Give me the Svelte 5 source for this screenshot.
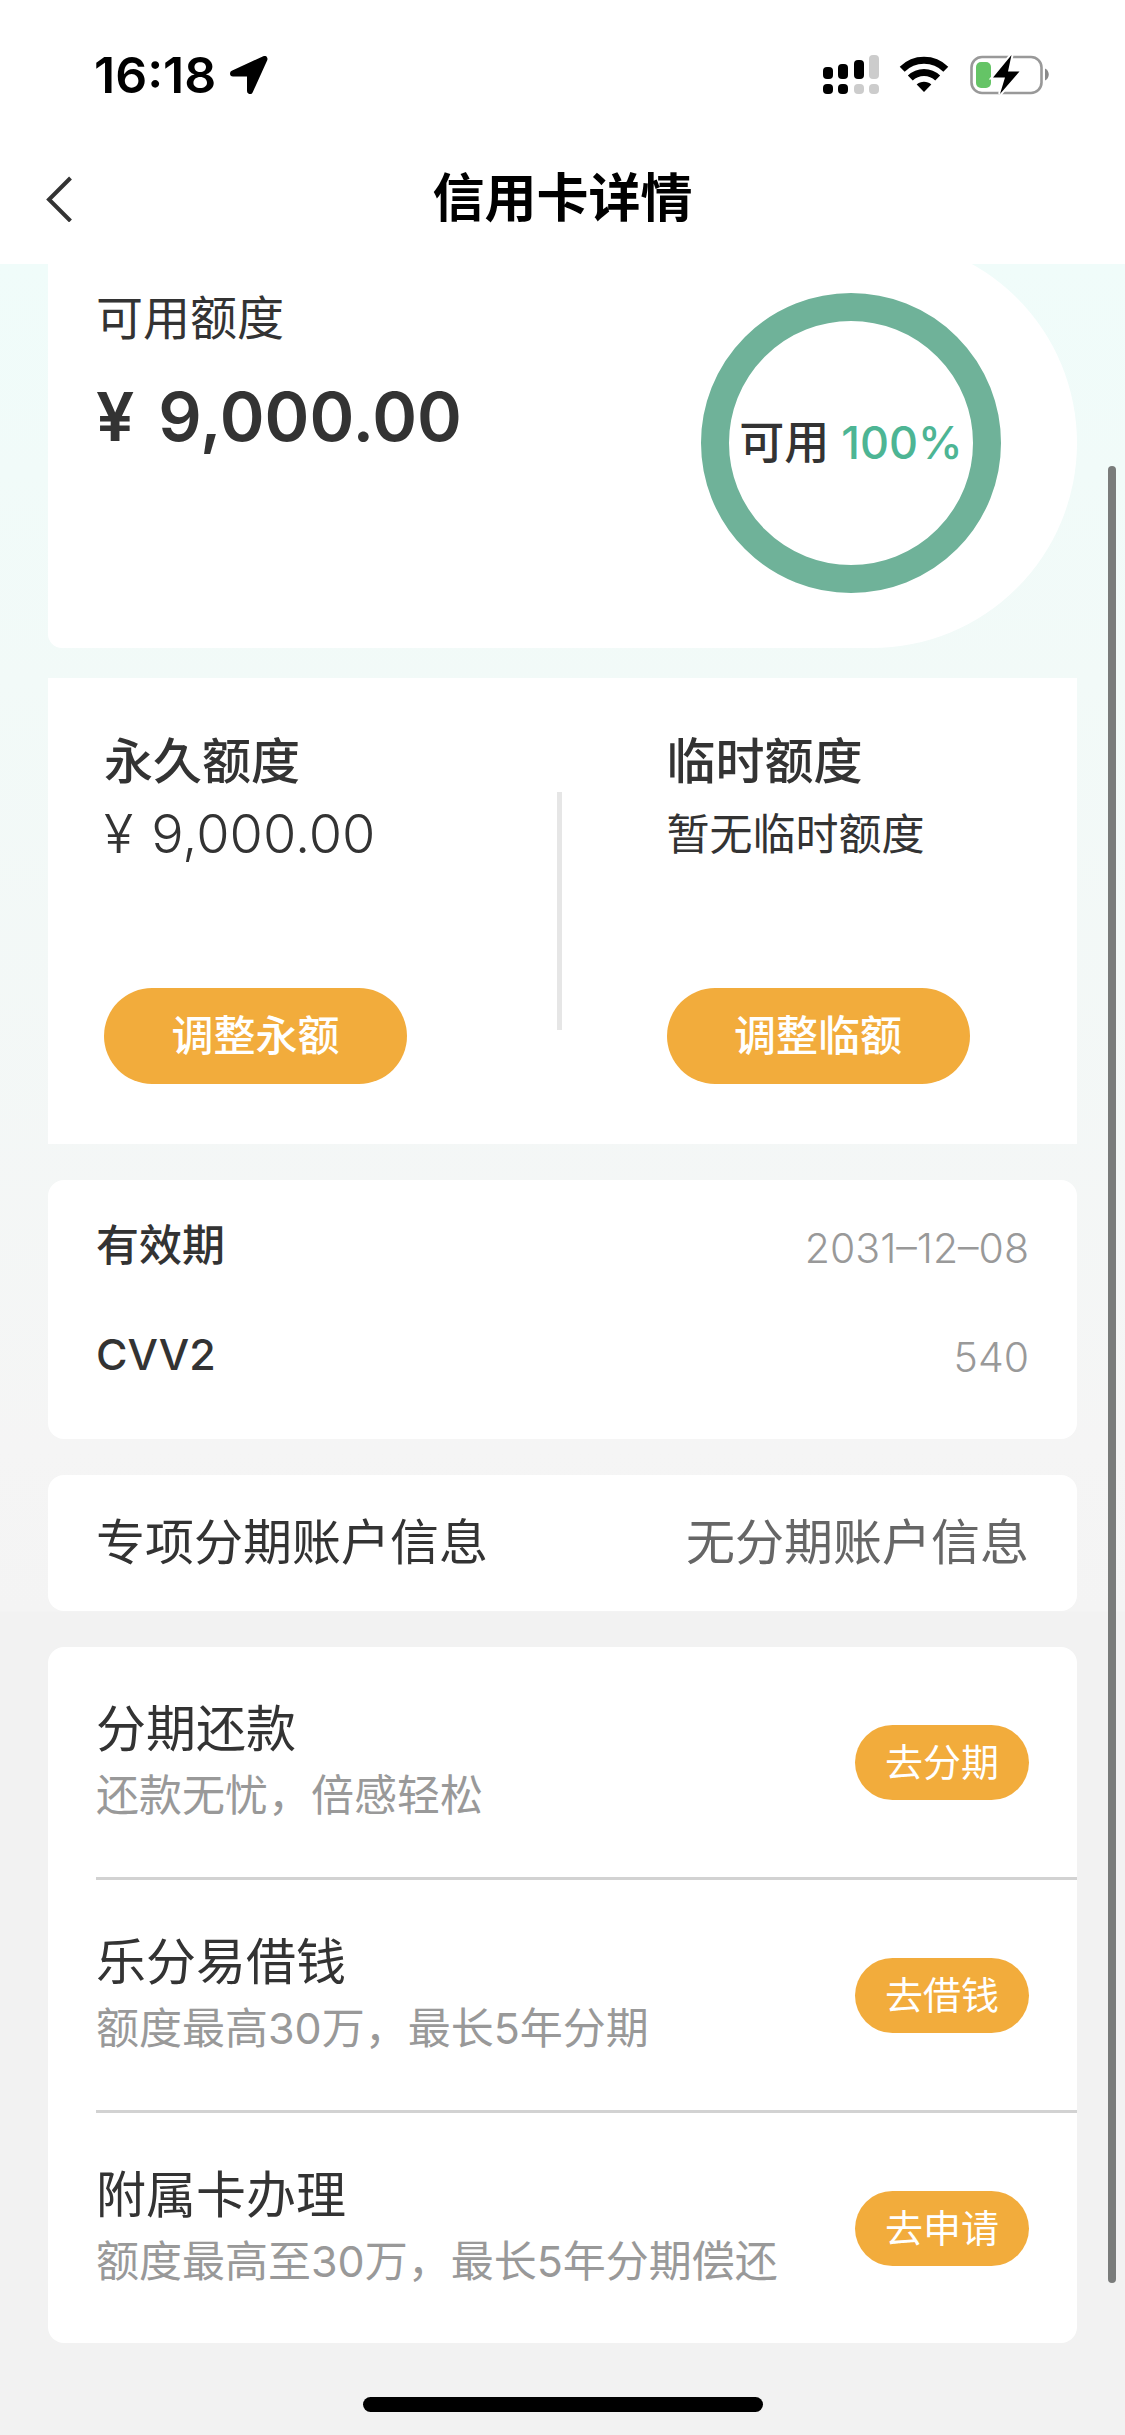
<script lang="ts">
  const limits = [
    { title: "永久额度", value: "9,000.00", money: true, action: "调整永额" },
    { title: "临时额度", value: "暂无临时额度", money: false, action: "调整临额" },
  ];

  const info = [
    { label: "有效期", value: "2031–12–08" },
    { label: "CVV2", value: "540" },
  ];

  const services = [
    { title: "分期还款", desc: "还款无忧，倍感轻松", action: "去分期" },
    { title: "乐分易借钱", desc: "额度最高30万，最长5年分期", action: "去借钱" },
    { title: "附属卡办理", desc: "额度最高至30万，最长5年分期偿还", action: "去申请" },
  ];

  let percent = 100;
  const radius = 136;
  const around = 2 * Math.PI * radius;
  $: dash = (percent / 100) * around;
</script>

<div class="page">
  <header>
    <div class="status">
      <div class="clock">
        <span>16:18</span>
        <svg width="38" height="38" viewBox="0 0 38 38">
          <path d="M3 17.5 34.500 3 20 35V17.500Z" fill="#000" stroke="#000" stroke-width="6" stroke-linejoin="round" />
        </svg>
      </div>
      <div class="signals">
        <svg width="56" height="40" viewBox="0 0 56 40">
          <g fill="#000">
            <rect x="0" y="12" width="10" height="12" rx="4" />
            <rect x="15" y="9" width="10" height="15" rx="4" />
            <rect x="31" y="5" width="10" height="19" rx="4" />
            <rect x="0" y="29" width="10" height="10" rx="4" />
            <rect x="15" y="29" width="10" height="10" rx="4" />
          </g>
          <g fill="#ccc">
            <rect x="46" y="0" width="10" height="24" rx="4" />
            <rect x="31" y="29" width="10" height="10" rx="4" />
            <rect x="46" y="29" width="10" height="10" rx="4" />
          </g>
        </svg>
        <svg width="50" height="40" viewBox="0 0 50 40">
          <g fill="none" stroke="#000" stroke-width="7">
            <path d="M3.200 14.200A31 31 0 0 1 46.800 14.200" />
            <path d="M11.300 23A19.500 19.500 0 0 1 38.700 23" />
          </g>
          <path d="M17.700 29.500C21.500 25.800 28.500 25.800 32.300 29.500L25 37Z" fill="#000" />
        </svg>
        <svg width="80" height="40" viewBox="0 0 80 40">
          <rect x="2.500" y="2" width="70" height="36" rx="10.500" fill="none" stroke="#999" stroke-width="2.600" />
          <path d="M76 13.500c5 2 5 10 0 12Z" fill="#8a8a8a" />
          <rect x="7" y="7" width="15" height="26" rx="5" fill="#65c466" />
          <path d="M42.500 0 24 22.500h12L31 39 50.500 16.500H39Z" fill="#000" stroke="#fff" stroke-width="4" paint-order="stroke" />
        </svg>
      </div>
    </div>
    <nav>
      <button class="back" aria-label="返回">
        <svg width="28" height="46" viewBox="0 0 28 46">
          <path d="M25.500 2 4 23.500 25.500 45" fill="none" stroke="#333" stroke-width="4" />
        </svg>
      </button>
      <h1>信用卡详情</h1>
    </nav>
  </header>

  <main>
    <section class="available">
      <div>
        <p class="label">可用额度</p>
        <p class="amount"><span>¥</span>9,000.00</p>
      </div>
      <div class="ring">
        <svg viewBox="0 0 300 300">
          <circle cx="150" cy="150" r={radius} fill="none" stroke="#6fb299" stroke-width="28" stroke-dasharray="{dash} {around}" transform="rotate(-90 150 150)" />
        </svg>
        <p>可用 <span>{percent}%</span></p>
      </div>
    </section>

    <section class="limits">
      {#each limits as limit}
        <div class="limit">
          <h2>{limit.title}</h2>
          {#if limit.money}
            <p class="money"><span>¥</span>{limit.value}</p>
          {:else}
            <p>{limit.value}</p>
          {/if}
          <button class="pill big">{limit.action}</button>
        </div>
      {/each}
    </section>

    <dl class="card info">
      {#each info as row}
        <div>
          <dt>{row.label}</dt>
          <dd>{row.value}</dd>
        </div>
      {/each}
    </dl>

    <section class="card account">
      <h2>专项分期账户信息</h2>
      <p>无分期账户信息</p>
    </section>

    <ul class="card services">
      {#each services as service}
        <li>
          <div>
            <h2>{service.title}</h2>
            <p>{service.desc}</p>
          </div>
          <button class="pill">{service.action}</button>
        </li>
      {/each}
    </ul>
  </main>

  <div class="scrollbar"></div>
  <div class="home"></div>
</div>

<style>
  :global(body) {
    background: #f2f2f2;
  }
  .page {
    position: relative;
    min-height: 100vh;
    overflow: hidden;
    color: #333;
    font-family: Inter, "Noto Sans CJK SC", sans-serif;
    background: linear-gradient(#f0fcfa 264px, #f2faf8 680px, #f5f5f5 1450px, #f4f4f4 1611px, #f2f2f2 1612px);
  }
  h1, h2, p, dl, dd, ul {
    margin: 0;
    padding: 0;
  }
  h2 {
    font-size: 49px;
    font-weight: 400;
    line-height: 60px;
  }
  button {
    border: 0;
    padding: 0;
    font-family: inherit;
    background: none;
    cursor: pointer;
  }
  svg {
    display: block;
  }

  header {
    position: relative;
    z-index: 1;
    background: #fff;
  }
  .status {
    display: flex;
    justify-content: space-between;
    align-items: center;
    height: 134px;
    padding: 16px 76px 0 94px;
    box-sizing: border-box;
  }
  .clock {
    display: flex;
    align-items: center;
    gap: 14px;
    color: #000;
    font-size: 50px;
    font-weight: 600;
    line-height: 60px;
  }
  .signals {
    display: flex;
    align-items: center;
    gap: 20px;
  }
  nav {
    display: flex;
    align-items: center;
    justify-content: center;
    position: relative;
    height: 130px;
  }
  .back {
    position: absolute;
    left: 45px;
  }
  h1 {
    color: #000;
    font-size: 52px;
    font-weight: 700;
    line-height: 76px;
  }

  main {
    padding: 0 48px;
  }
  .available {
    display: flex;
    justify-content: space-between;
    align-items: center;
    height: 410px;
    margin-top: -26px;
    padding: 0 76px 0 48px;
    box-sizing: border-box;
    background: #fff;
    border-radius: 14px 205px 205px 14px;
  }
  .available > div:first-child {
    align-self: flex-start;
    padding-top: 50px;
  }
  .label {
    font-size: 47px;
    line-height: 60px;
  }
  .amount {
    display: flex;
    gap: 24px;
    margin-top: 26px;
    font-size: 68px;
    font-weight: 600;
    line-height: 84px;
  }
  .ring {
    display: grid;
    place-items: center;
    width: 300px;
    height: 300px;
  }
  .ring > * {
    grid-area: 1 / 1;
  }
  .ring svg {
    width: 100%;
  }
  .ring p {
    font-size: 45px;
    font-weight: 500;
    line-height: 60px;
    white-space: nowrap;
  }
  .ring span {
    color: #4db594;
  }

  .limits {
    display: grid;
    grid-template-columns: 1fr 1fr;
    margin-top: 30px;
    background: #fff;
    position: relative;
  }
  .limits::after {
    content: "";
    position: absolute;
    top: 114px;
    bottom: 114px;
    left: calc(50% - 6px);
    width: 5px;
    background: #e6e6e6;
  }
  .limit {
    padding: 54px 0 60px 56px;
  }
  .limit + .limit {
    padding-left: 104px;
  }
  .limit h2 {
    font-weight: 500;
  }
  .limit p {
    font-size: 43px;
    line-height: 84px;
  }
  .limit .money {
    display: flex;
    gap: 18px;
    font-size: 54px;
    font-weight: 300;
  }
  .pill {
    flex: none;
    width: 174px;
    height: 75px;
    border-radius: 48px;
    background: #f2ac3c;
    color: #fff;
    font-size: 38px;
    line-height: 60px;
  }
  .big {
    width: 303px;
    height: 96px;
    margin-top: 112px;
    font-size: 42px;
    font-weight: 500;
  }

  .card {
    margin-top: 36px;
    border-radius: 16px;
    background: #fff;
  }
  .info {
    padding: 35px 48px 52px;
  }
  .info div {
    display: flex;
    justify-content: space-between;
    font-size: 43px;
    line-height: 60px;
  }
  .info div + div {
    margin-top: 46px;
  }
  .info dt {
    font-weight: 500;
  }
  .info dd {
    padding-top: 3px;
    color: #999;
    font-size: 41px;
    font-weight: 300;
  }
  .account {
    display: flex;
    justify-content: space-between;
    align-items: center;
    height: 136px;
    padding: 0 48px;
  }
  .account p {
    color: #666;
    font-size: 49px;
    line-height: 60px;
  }
  .services {
    list-style: none;
    padding-left: 48px;
  }
  .services li {
    display: flex;
    justify-content: space-between;
    align-items: center;
    padding: 52px 48px 52px 0;
  }
  .services li + li {
    border-top: 3px solid #d2d2d2;
  }
  .services h2 {
    font-size: 50px;
  }
  .services p {
    margin-top: 6px;
    color: #999;
    font-size: 43px;
    line-height: 60px;
  }

  .scrollbar {
    position: absolute;
    top: 466px;
    right: 9px;
    bottom: 152px;
    width: 8px;
    border-radius: 4px;
    background: #7a7c7b;
  }
  .home {
    position: absolute;
    bottom: 23px;
    left: calc(50% - 200px);
    width: 400px;
    height: 15px;
    border-radius: 8px;
    background: #000;
  }
</style>
